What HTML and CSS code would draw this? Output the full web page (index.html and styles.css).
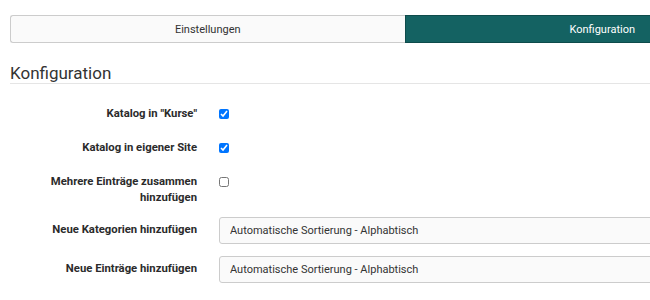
FILE: index.html
```html
<!DOCTYPE html>
<html lang="de">
<head>
    <meta charset="UTF-8">
    <meta name="viewport" content="width=device-width, initial-scale=1.0">
    <link rel="stylesheet" href="styles.css">
</head>
<body>
<div class="page">
    <!-- Tab navigation -->
    <div class="tabs">
        <a class="tab" href="#">Einstellungen</a>
        <a class="tab active" href="#">Konfiguration</a>
    </div>

    <h2 class="section-title">Konfiguration</h2>

    <form class="config-form">
        <div class="form-row check-row">
            <label class="form-label" for="catCourses">Katalog in "Kurse"</label>
            <div class="form-control">
                <input type="checkbox" id="catCourses" checked>
            </div>
        </div>
        <div class="form-row check-row">
            <label class="form-label" for="catSite">Katalog in eigener Site</label>
            <div class="form-control">
                <input type="checkbox" id="catSite" checked>
            </div>
        </div>
        <div class="form-row check-row multi">
            <label class="form-label" for="multiAdd">Mehrere Einträge zusammen hinzufügen</label>
            <div class="form-control">
                <input type="checkbox" id="multiAdd">
            </div>
        </div>
        <div class="form-row select-row">
            <label class="form-label" for="newCats">Neue Kategorien hinzufügen</label>
            <div class="form-control">
                <select id="newCats">
                    <option>Automatische Sortierung - Alphabtisch</option>
                </select>
            </div>
        </div>
        <div class="form-row select-row">
            <label class="form-label" for="newEntries">Neue Einträge hinzufügen</label>
            <div class="form-control">
                <select id="newEntries">
                    <option>Automatische Sortierung - Alphabtisch</option>
                </select>
            </div>
        </div>
    </form>
</div>
</body>
</html>
```

FILE: styles.css
```css
html, body {
    overflow: hidden;
}

body {
    font-family: Roboto, "Liberation Sans", Arial, sans-serif;
    background-color: #fff;
    color: #333;
    margin: 0;
    padding: 0;
}

.page {
    width: 790px;
    padding: 15px 10px 0;
}

.tabs {
    display: flex;
    height: 28px;
}

.tab {
    flex: 1;
    display: flex;
    align-items: center;
    justify-content: center;
    font-size: 11px;
    text-decoration: none;
    color: #333;
    background-color: #fafafa;
    border: 1px solid #ccc;
}

.tab:first-child {
    border-radius: 3px 0 0 3px;
    border-right: none;
}

.tab.active {
    background-color: #146262;
    border-color: #0e4b4b;
    color: #fff;
}

.section-title {
    font-size: 17px;
    font-weight: normal;
    line-height: 20px;
    color: #333;
    margin: 20px 0 18px;
    padding: 0;
    border-bottom: 1px solid #e5e5e5;
}

.form-row {
    display: flex;
    align-items: flex-start;
}

.form-label {
    flex: 0 0 187px;
    text-align: right;
    font-size: 11.3px;
    font-weight: bold;
    line-height: 16px;
    color: #2b2b2b;
}

.form-control {
    flex: 1;
    margin-left: 22px;
}

.check-row {
    margin-bottom: 10px;
}

.check-row .form-label {
    padding: 4px 0;
}

.check-row.multi {
    margin-bottom: 7px;
}

.check-row .form-control {
    padding-top: 7px;
}

input[type="checkbox"] {
    width: 10px;
    height: 10px;
    margin: 0;
    display: block;
}

.select-row {
    margin-bottom: 12px;
}

.select-row .form-label {
    padding-top: 5px;
}

select {
    appearance: none;
    width: 100%;
    height: 27px;
    padding: 0 10px;
    font-family: Roboto, "Liberation Sans", Arial, sans-serif;
    font-size: 11px;
    color: #333;
    background-color: #fafafa;
    border: 1px solid #ccc;
    border-radius: 3px;
    outline: none;
}
```
